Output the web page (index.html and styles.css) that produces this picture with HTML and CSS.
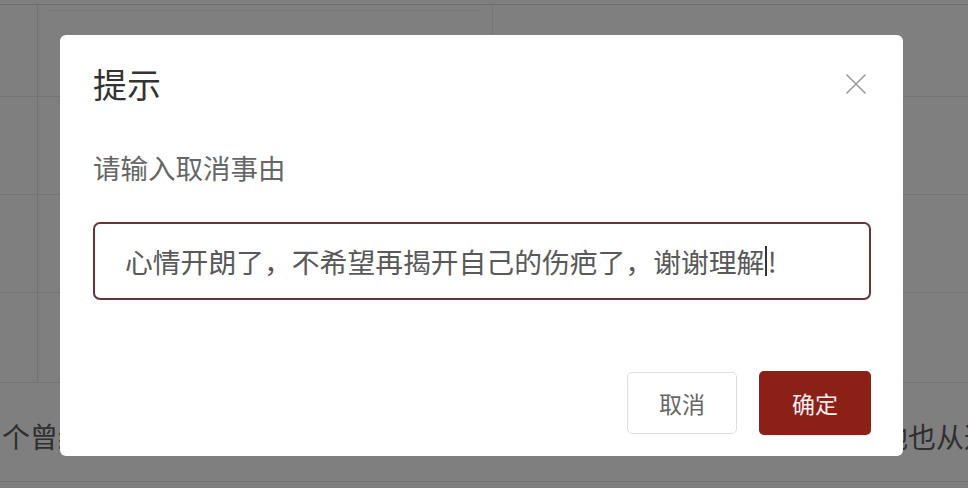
FILE: index.html
```html
<!DOCTYPE html>
<html lang="zh-CN">
<head>
<meta charset="utf-8">
<title>提示</title>
<link rel="stylesheet" href="styles.css">
</head>
<body>
<div class="page">
  <div class="table">
    <div class="row r1"><div class="cell-left"></div><div class="cell-mid"><div class="mid-line"></div></div><div class="cell-right"></div></div>
    <div class="row r2"><div class="cell-left"></div><div class="cell-mid"></div><div class="cell-right"></div></div>
    <div class="row r3"><div class="cell-left"></div><div class="cell-mid"></div><div class="cell-right"></div></div>
    <div class="row r4"><div class="cell-left"></div><div class="cell-mid"></div><div class="cell-right"></div></div>
  </div>
  <div class="text-row">
    <span class="text-left">个曾经在这里留下过故事的人，如今已经远去</span>
    <span class="text-right">地也从这里</span>
  </div>
</div>

<div class="overlay">
  <div class="dialog">
    <div class="dialog-header">
      <div class="dialog-title">提示</div>
      <svg class="close" viewBox="0 0 20 20" width="20" height="20" aria-hidden="true">
        <path d="M1 1 L19 19 M19 1 L1 19" stroke="#9a9a9a" stroke-width="1.6" fill="none" stroke-linecap="round"/>
      </svg>
    </div>
    <div class="dialog-label">请输入取消事由</div>
    <div class="dialog-input">心情开朗了，不希望再揭开自己的伤疤了，谢谢理解<span class="caret"></span>!</div>
    <div class="dialog-footer">
      <button class="btn btn-cancel">取消</button>
      <button class="btn btn-ok">确定</button>
    </div>
  </div>
</div>
</body>
</html>
```

FILE: styles.css
```css
html, body {
  margin: 0;
  padding: 0;
}

body {
  width: 968px;
  height: 488px;
  overflow: hidden;
  background: #ffffff;
  font-family: "Noto Sans CJK SC", "Noto Sans", sans-serif;
  position: relative;
}

.page {
  padding-top: 4px;
  height: 488px;
  box-sizing: border-box;
}

.table {
  border-top: 1px solid #dcdcdc;
}

.row {
  display: flex;
  border-bottom: 1px solid #e8e8e8;
}

.r1 { height: 91px; }
.r2 { height: 97px; }
.r3 { height: 97px; }
.r4 { height: 89px; }

.cell-left {
  width: 37px;
  border-right: 1px solid #e4e4e4;
}

.cell-mid {
  width: 455px;
  border-right: 1px solid #ececec;
  padding-top: 5px;
  padding-left: 10px;
  box-sizing: border-box;
}

.r2 .cell-mid, .r3 .cell-mid, .r4 .cell-mid {
  border-right-color: transparent;
}

.mid-line {
  border-top: 1px solid #ececec;
  margin-right: 12px;
}

.cell-right {
  flex: 1;
}

.text-row {
  display: flex;
  height: 99px;
  box-sizing: border-box;
  padding-top: 33px;
  border-bottom: 1px solid #e4e4e4;
  font-size: 28px;
  line-height: 40px;
  color: #5e5e5e;
  white-space: nowrap;
}

.text-left {
  flex: 1;
  overflow: hidden;
  padding-left: 2px;
}

.text-right {
  width: 88px;
  overflow: hidden;
}

.overlay {
  position: fixed;
  inset: 0;
  background: rgba(0, 0, 0, 0.5);
  display: flex;
  align-items: flex-start;
  padding: 35px 0 0 60px;
  box-sizing: border-box;
}

.dialog {
  width: 843px;
  height: 421px;
  background: #ffffff;
  border-radius: 6px;
  box-sizing: border-box;
  padding: 29px 32px 21px 33px;
  display: flex;
  flex-direction: column;
}

.dialog-header {
  display: flex;
  align-items: center;
  justify-content: space-between;
  height: 40px;
}

.dialog-title {
  font-size: 34px;
  line-height: 40px;
  color: #333333;
}

.close {
  width: 20px;
  height: 20px;
  margin-right: 5px;
}

.dialog-label {
  margin-top: 46px;
  font-size: 27.5px;
  line-height: 34px;
  color: #666666;
}

.dialog-input {
  margin-top: 38px;
  height: 78px;
  box-sizing: border-box;
  border: 2px solid #6b3434;
  border-radius: 7px;
  padding: 0 30px;
  display: flex;
  align-items: center;
  font-size: 27.8px;
  line-height: 34px;
  color: #595959;
  white-space: nowrap;
}

.caret {
  display: inline-block;
  width: 1.5px;
  height: 30px;
  background: #333333;
  margin: 0 1px 0 1px;
}

.dialog-footer {
  margin-top: auto;
  display: flex;
  justify-content: flex-end;
  align-items: center;
  gap: 22px;
}

.btn {
  font-family: "Noto Sans CJK SC", "Noto Sans", sans-serif;
  font-size: 23px;
  line-height: 30px;
  border-radius: 5px;
  padding: 0;
  cursor: pointer;
}

.btn-cancel {
  width: 110px;
  height: 62px;
  background: #ffffff;
  border: 1.5px solid #dedede;
  color: #666666;
}

.btn-ok {
  width: 112px;
  height: 64px;
  background: #8c1f16;
  border: none;
  color: #fbeeee;
}
```
